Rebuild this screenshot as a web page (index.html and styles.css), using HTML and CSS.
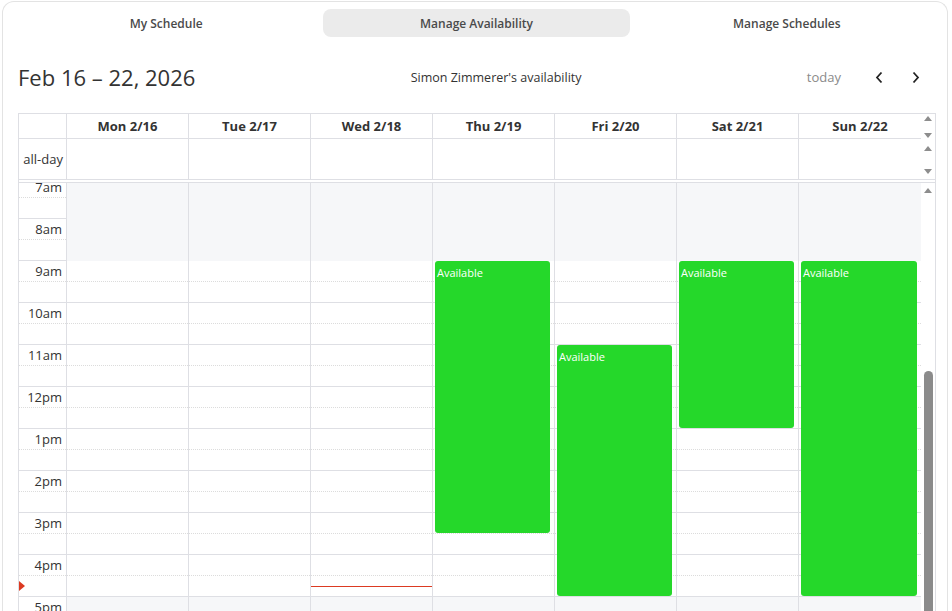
FILE: index.html
```html
<!DOCTYPE html>
<html lang="en">
<head>
    <meta charset="UTF-8">
    <meta name="viewport" content="width=device-width, initial-scale=1.0">
    <title>Manage Availability</title>
    <link rel="stylesheet" href="styles.css">
</head>
<body>

    <div class="card">
        <nav class="tabs">
            <button class="tab">My Schedule</button>
            <button class="tab active">Manage Availability</button>
            <button class="tab">Manage Schedules</button>
        </nav>

        <div class="toolbar">
            <h2 class="title">Feb 16 – 22, 2026</h2>
            <div class="owner">Simon Zimmerer's availability</div>
            <div class="nav">
                <button class="today">today</button>
                <button class="arrow prev">
                    <svg width="9" height="13" viewBox="0 0 9 13"><path d="M6.5 1.5 L2 6.5 L6.5 11.5" fill="none" stroke="#222" stroke-width="1.8"/></svg>
                </button>
                <button class="arrow next">
                    <svg width="9" height="13" viewBox="0 0 9 13"><path d="M2.5 1.5 L7 6.5 L2.5 11.5" fill="none" stroke="#222" stroke-width="1.8"/></svg>
                </button>
            </div>
        </div>

        <div class="calendar">
            <div class="row head">
                <div class="axis"></div>
                <div class="day">Mon 2/16</div>
                <div class="day">Tue 2/17</div>
                <div class="day">Wed 2/18</div>
                <div class="day">Thu 2/19</div>
                <div class="day">Fri 2/20</div>
                <div class="day">Sat 2/21</div>
                <div class="day last">Sun 2/22</div>
                <div class="bar"><span class="up"></span><span class="down"></span></div>
            </div>

            <div class="row allday">
                <div class="axis">all-day</div>
                <div class="day"></div>
                <div class="day"></div>
                <div class="day"></div>
                <div class="day"></div>
                <div class="day"></div>
                <div class="day"></div>
                <div class="day last"></div>
                <div class="bar"><span class="up"></span><span class="down"></span></div>
            </div>

            <div class="divider"></div>

            <div class="body">
                <div class="scroller">
                    <div class="grid" id="grid"></div>
                </div>
                <div class="bar tall"><span class="up"></span><span class="thumb"></span></div>
            </div>
        </div>
    </div>

    <script>
        const START = 7;
        const END = 19;
        const HOUR = 42;

        const availability = [
            { day: 3, start: 9, end: 15.5 },
            { day: 4, start: 11, end: 17 },
            { day: 5, start: 9, end: 13 },
            { day: 6, start: 9, end: 17 }
        ];

        const now = { day: 2, time: 16.75 };

        const grid = document.getElementById("grid");

        function hourLabel(h) {
            if (h === 12) return "12pm";
            return h < 12 ? h + "am" : (h - 12) + "pm";
        }

        function isOff(t) {
            return t < 9 || t >= 17;
        }

        // axis column
        const axis = document.createElement("div");
        axis.className = "col axis-col";
        for (let t = START; t < END; t += 0.5) {
            const slot = document.createElement("div");
            slot.className = "slot" + (t % 1 ? " minor" : "");
            if (t % 1 === 0) {
                slot.innerHTML = '<span class="label">' + hourLabel(t) + '</span>';
            }
            axis.appendChild(slot);
        }
        const marker = document.createElement("div");
        marker.className = "now-arrow";
        marker.style.top = ((now.time - START) * HOUR - 5) + "px";
        axis.appendChild(marker);
        grid.appendChild(axis);

        // day columns
        for (let d = 0; d < 7; d++) {
            const col = document.createElement("div");
            col.className = "col day-col" + (d === 6 ? " last" : "");
            for (let t = START; t < END; t += 0.5) {
                const slot = document.createElement("div");
                let cls = "slot";
                if (t % 1) cls += " minor";
                if (isOff(t)) cls += " off";
                if ((isOff(t) && t !== 17) || t === 9) cls += " seam";
                slot.className = cls;
                col.appendChild(slot);
            }

            availability.filter(a => a.day === d).forEach(a => {
                const ev = document.createElement("div");
                ev.className = "event";
                ev.style.top = ((a.start - START) * HOUR + 1) + "px";
                ev.style.height = ((a.end - a.start) * HOUR - 1) + "px";
                ev.textContent = "Available";
                col.appendChild(ev);
            });

            if (now.day === d) {
                const line = document.createElement("div");
                line.className = "now-line";
                line.style.top = Math.round((now.time - START) * HOUR) + "px";
                col.appendChild(line);
            }

            grid.appendChild(col);
        }
    </script>

</body>
</html>
```

FILE: styles.css
```css
html, body {
    margin: 0;
    padding: 0;
    height: 611px;
    overflow: hidden;
    background: #fff;
}

body {
    font-family: "Open Sans", "Noto Sans", sans-serif;
    color: #333;
}

button {
    font-family: inherit;
    border: none;
    background: none;
    padding: 0;
    cursor: pointer;
}

.card {
    box-sizing: border-box;
    height: 660px;
    margin: 1px 4px 0 2px;
    padding: 7px 11px 0 15px;
    border: 1px solid #e3e3e3;
    border-bottom: none;
    border-radius: 12px 12px 0 0;
}

/* tabs */
.tabs {
    display: grid;
    grid-template-columns: repeat(3, 1fr);
    gap: 4px;
    margin: 0 -4px 0 -5px;
}

.tab {
    height: 28px;
    border-radius: 8px;
    font-size: 12px;
    font-weight: 600;
    color: #4a4a4a;
}

.tab.active {
    background-color: #ebebeb;
}

/* toolbar */
.toolbar {
    display: flex;
    justify-content: space-between;
    align-items: center;
    height: 44px;
    margin: 18px 0 14px;
}

.title {
    margin: 0;
    font-size: 22px;
    font-weight: 400;
    color: #333;
}

.owner {
    font-size: 12.5px;
    color: #333;
}

.nav {
    display: flex;
    align-items: center;
    margin-right: 6px;
}

.today {
    height: 28px;
    padding: 0 10px;
    font-size: 13px;
    color: #8a8a8a;
}

.arrow {
    width: 28px;
    height: 28px;
    display: flex;
    align-items: center;
    justify-content: center;
}

.arrow.prev {
    margin-left: 15px;
}

.arrow.next {
    margin-left: 8px;
}

/* calendar */
.calendar {
    border: 1px solid #dedfe4;
    border-bottom: none;
    font-size: 13px;
}

.row {
    display: grid;
    grid-template-columns: 48px repeat(7, 122px) 1fr;
}

.row .axis,
.row .day {
    border-right: 1px solid #dedfe4;
}

.row .day.last {
    border-right: none;
}

.head .axis,
.head .day {
    height: 24px;
    border-bottom: 1px solid #dedfe4;
}

.head .day {
    line-height: 24px;
    text-align: center;
    font-weight: 700;
}

.allday {
    height: 40px;
    border-bottom: 1px solid #dedfe4;
}

.allday .axis {
    display: flex;
    align-items: center;
    justify-content: flex-end;
    padding-right: 3px;
}

.divider {
    height: 2px;
    border-bottom: 1px solid #dedfe4;
}

/* fake scrollbars */
.bar {
    display: flex;
    flex-direction: column;
    justify-content: space-between;
    align-items: center;
    padding: 2px 0 1px;
}

.allday .bar {
    padding: 7px 0 5px;
}

.up,
.down {
    width: 0;
    height: 0;
    border-left: 4.5px solid transparent;
    border-right: 4.5px solid transparent;
}

.up {
    border-bottom: 5px solid #8d8d8d;
}

.down {
    border-top: 5px solid #8d8d8d;
}

.bar.tall {
    justify-content: flex-start;
    padding-top: 5px;
}

.thumb {
    width: 9px;
    height: 300px;
    margin-top: 178px;
    border-radius: 5px;
    background-color: #8b8b8b;
}

/* time grid */
.body {
    display: flex;
    height: 440px;
}

.scroller {
    flex: 0 0 902px;
    overflow: hidden;
}

.bar.tall {
    flex: 1;
}

.grid {
    display: grid;
    grid-template-columns: 48px repeat(7, 122px);
    margin-top: -7px;
}

.col {
    position: relative;
    border-right: 1px solid #dedfe4;
}

.col.last {
    border-right: none;
}

.slot {
    height: 20px;
    border-top: 1px solid #dedfe4;
}

.slot.minor {
    border-top: 1px dotted #dcdcdc;
}

.slot.off {
    background-color: #f6f7f9;
}

.slot.seam {
    border-top: 1px solid #f6f7f9;
}

.label {
    display: block;
    line-height: 20px;
    text-align: right;
    padding-right: 4px;
}

.event {
    position: absolute;
    left: 2px;
    right: 4px;
    box-sizing: border-box;
    padding: 5px 2px 4px;
    border-radius: 3px;
    background-color: #25d82a;
    color: #fff;
    font-size: 11px;
    line-height: 14px;
}

.now-line {
    position: absolute;
    left: 0;
    right: 0;
    height: 1px;
    background-color: #dc3a22;
}

.now-arrow {
    position: absolute;
    left: 0;
    width: 0;
    height: 0;
    border-top: 5px solid transparent;
    border-bottom: 5px solid transparent;
    border-left: 6px solid #dc3a22;
}
```
